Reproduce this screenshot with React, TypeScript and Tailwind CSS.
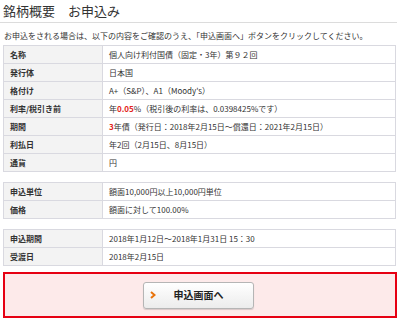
import React from "react";

type Row = { label: string; value: React.ReactNode };

const red = "text-[#e2231a]";

const basic: Row[] = [
  { label: "名称", value: "個人向け利付国債（固定・3年）第９２回" },
  { label: "発行体", value: "日本国" },
  { label: "格付け", value: "A+（S&P）、A1（Moody's）" },
  {
    label: "利率/税引き前",
    value: (
      <>
        年<span className={`${red} font-bold`}>0.05</span>%（税引後の利率は、0.0398425%です）
      </>
    ),
  },
  {
    label: "期間",
    value: (
      <>
        <span className={`${red} font-bold`}>3</span>年債（発行日：2018年2月15日〜償還日：2021年2月15日）
      </>
    ),
  },
  { label: "利払日", value: "年2回（2月15日、8月15日）" },
  { label: "通貨", value: "円" },
];

const unit: Row[] = [
  { label: "申込単位", value: "額面10,000円以上10,000円単位" },
  { label: "価格", value: "額面に対して100.00%" },
];

const period: Row[] = [
  { label: "申込期間", value: "2018年1月12日〜2018年1月31日 15：30" },
  { label: "受渡日", value: "2018年2月15日" },
];

function InfoTable({ rows }: { rows: Row[] }) {
  return (
    <table className="w-full border-collapse">
      <tbody>
        {rows.map((r) => (
          <tr key={r.label} className="h-[18px]">
            <th className="w-[99px] border border-[#d9d9e0] bg-[#f3f3f3] pl-[6px] text-left font-bold">
              {r.label}
            </th>
            <td className="border border-[#d9d9e0] bg-white pl-[6px]">{r.value}</td>
          </tr>
        ))}
      </tbody>
    </table>
  );
}

export default function App() {
  return (
    <div
      className="w-[400px] h-[320px] overflow-hidden bg-white text-[#333] text-[8px] leading-none"
      style={{ fontFamily: '"Noto Sans CJK JP", "Noto Sans", sans-serif' }}
    >
      <h1 className="px-[3px] pt-[3px] pb-[3px] text-[13px] leading-[16px] text-[#333] border-b border-[#dcdcdc] mr-[3px]">
        銘柄概要　お申込み
      </h1>
      <p className="pl-[4px] pt-[8px] pb-[4px] leading-[10px]">
        お申込をされる場合は、以下の内容をご確認のうえ、「申込画面へ」ボタンをクリックしてください。
      </p>
      <div className="flex flex-col gap-[10px] pl-[3px] pr-[4px]">
        <InfoTable rows={basic} />
        <InfoTable rows={unit} />
        <InfoTable rows={period} />
      </div>
      <div className="mx-[3px] mt-[6px] h-[46px] border-2 border-[#e60012] bg-[#fdeaea] flex items-center justify-center">
        <button
          type="button"
          className="relative w-[111px] h-[27px] ml-[-3px] rounded-[3px] border border-[#b5b5b5] bg-gradient-to-b from-white to-[#ececec] shadow-[0_1px_1px_rgba(0,0,0,0.15)] text-[10px] font-bold text-[#222] flex items-center justify-center"
        >
          <svg
            className="absolute left-[6px] top-1/2 -translate-y-1/2"
            width="6"
            height="8"
            viewBox="0 0 6 8"
          >
            <path d="M1 1 L4.5 4 L1 7" fill="none" stroke="#e8730c" strokeWidth="2" />
          </svg>
          申込画面へ
        </button>
      </div>
    </div>
  );
}
